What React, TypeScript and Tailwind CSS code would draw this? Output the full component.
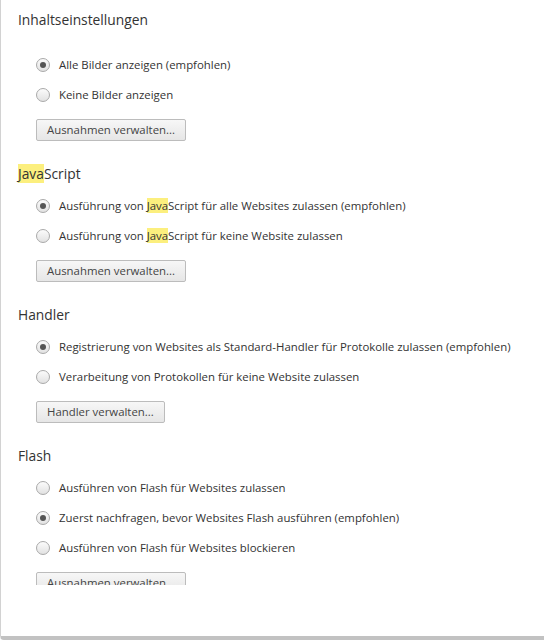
import React from "react";

type Opt = { label: React.ReactNode; checked?: boolean };

const Java = () => <span className="bg-[#fcef7e]">Java</span>;

function Radio({ checked }: { checked?: boolean }) {
  return (
    <span className="w-[14px] h-[14px] rounded-full border border-[#a9a9a9] bg-gradient-to-b from-[#fbfbfb] to-[#e2e2e2] flex items-center justify-center shrink-0">
      {checked && <span className="w-[6px] h-[6px] rounded-full bg-[#555]" />}
    </span>
  );
}

function Section({
  title,
  options,
  button,
  first,
}: {
  title: React.ReactNode;
  options: Opt[];
  button: string;
  first?: boolean;
}) {
  return (
    <section className={first ? "" : "mt-[23px]"}>
      <h3 className="text-[13.8px] leading-[20px] text-[#333] font-normal">{title}</h3>
      <div className={`${first ? "mt-[20px]" : "mt-[7px]"} pl-[18px]`}>
        {options.map((o, i) => (
          <label key={i} className="h-[30px] flex items-center gap-[9px] text-[11.4px] text-[#333]">
            <Radio checked={o.checked} />
            <span>{o.label}</span>
          </label>
        ))}
      </div>
      <button className="mt-[9px] ml-[18px] h-[22px] px-[10px] border border-[#bcbcbc] rounded-[2px] bg-gradient-to-b from-[#f7f7f7] to-[#e6e6e6] text-[11.4px] text-[#444] leading-[20px]">
        {button}
      </button>
    </section>
  );
}

export default function App() {
  return (
    <div
      className="w-[544px] h-[640px] bg-white border-l border-[#d2d2d2] border-b-[4px] border-b-[#c2c2c2] rounded-bl-[4px] overflow-hidden"
      style={{ fontFamily: '"Open Sans", "Noto Sans", sans-serif' }}
    >
      <div className="h-[585px] overflow-hidden pl-[17px] pt-[10px]">
        <Section
          first
          title="Inhaltseinstellungen"
          options={[
            { label: "Alle Bilder anzeigen (empfohlen)", checked: true },
            { label: "Keine Bilder anzeigen" },
          ]}
          button="Ausnahmen verwalten..."
        />
        <Section
          title={
            <>
              <Java />Script
            </>
          }
          options={[
            {
              label: (
                <>
                  Ausführung von <Java />Script für alle Websites zulassen (empfohlen)
                </>
              ),
              checked: true,
            },
            {
              label: (
                <>
                  Ausführung von <Java />Script für keine Website zulassen
                </>
              ),
            },
          ]}
          button="Ausnahmen verwalten..."
        />
        <Section
          title="Handler"
          options={[
            {
              label: "Registrierung von Websites als Standard-Handler für Protokolle zulassen (empfohlen)",
              checked: true,
            },
            { label: "Verarbeitung von Protokollen für keine Website zulassen" },
          ]}
          button="Handler verwalten..."
        />
        <Section
          title="Flash"
          options={[
            { label: "Ausführen von Flash für Websites zulassen" },
            { label: "Zuerst nachfragen, bevor Websites Flash ausführen (empfohlen)", checked: true },
            { label: "Ausführen von Flash für Websites blockieren" },
          ]}
          button="Ausnahmen verwalten..."
        />
      </div>
    </div>
  );
}
